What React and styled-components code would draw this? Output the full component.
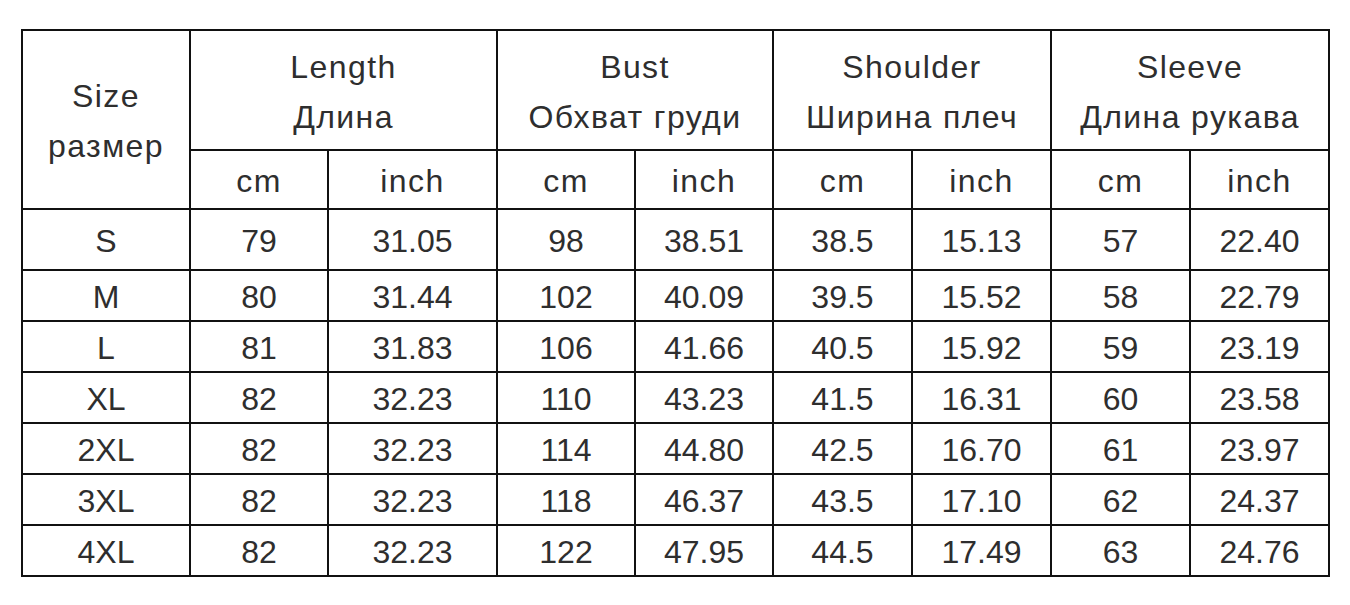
import React from "react"
import styled, { createGlobalStyle } from "styled-components"

const GlobalStyle = createGlobalStyle`
  html, body {
    margin: 0;
    padding: 0;
    background: #ffffff;
  }
  body {
    font-family: "Liberation Sans", Arial, sans-serif;
  }
`

const Page = styled.div`
  width: 1350px;
  height: 605px;
  padding: 29px 0 0 21px;
  box-sizing: border-box;
`

const Table = styled.table`
  border-collapse: collapse;
  table-layout: fixed;
  width: 1307px;
  border: 2px solid #333;
  color: #2e2e2e;
  font-size: 32px;
`

const Row = styled.tr`
  height: ${props => props.h}px;
`

const Cell = styled.td`
  border: 2px solid #111;
  padding: 3px 0 0;
  text-align: center;
  vertical-align: middle;
  font-weight: 400;
  line-height: ${props => (props.tight ? "50px" : "1")};
  letter-spacing: ${props => (props.word ? "1.4px" : "0")};
  white-space: nowrap;
`

const colWidths = [168, 138, 169, 138, 138, 139, 139, 139, 139]

const groups = [
  { en: "Length", ru: "Длина" },
  { en: "Bust", ru: "Обхват груди" },
  { en: "Shoulder", ru: "Ширина плеч" },
  { en: "Sleeve", ru: "Длина рукава" }
]

const rows = [
  ["S", "79", "31.05", "98", "38.51", "38.5", "15.13", "57", "22.40"],
  ["M", "80", "31.44", "102", "40.09", "39.5", "15.52", "58", "22.79"],
  ["L", "81", "31.83", "106", "41.66", "40.5", "15.92", "59", "23.19"],
  ["XL", "82", "32.23", "110", "43.23", "41.5", "16.31", "60", "23.58"],
  ["2XL", "82", "32.23", "114", "44.80", "42.5", "16.70", "61", "23.97"],
  ["3XL", "82", "32.23", "118", "46.37", "43.5", "17.10", "62", "24.37"],
  ["4XL", "82", "32.23", "122", "47.95", "44.5", "17.49", "63", "24.76"]
]

export default function App() {
  return (
    <Page>
      <GlobalStyle />
      <Table>
        <colgroup>
          {colWidths.map((w, i) => (
            <col key={i} style={{ width: w }} />
          ))}
        </colgroup>
        <thead>
          <Row h={120}>
            <Cell as="th" rowSpan={2} word tight>
              Size
              <br />
              размер
            </Cell>
            {groups.map(g => (
              <Cell as="th" key={g.en} colSpan={2} word tight>
                {g.en}
                <br />
                {g.ru}
              </Cell>
            ))}
          </Row>
          <Row h={59}>
            {groups.map(g => (
              <React.Fragment key={g.en}>
                <Cell as="th" word>cm</Cell>
                <Cell as="th" word>inch</Cell>
              </React.Fragment>
            ))}
          </Row>
        </thead>
        <tbody>
          {rows.map((r, i) => (
            <Row key={r[0]} h={i === 0 ? 61 : 51}>
              {r.map((v, j) => (
                <Cell key={j}>{v}</Cell>
              ))}
            </Row>
          ))}
        </tbody>
      </Table>
    </Page>
  )
}
